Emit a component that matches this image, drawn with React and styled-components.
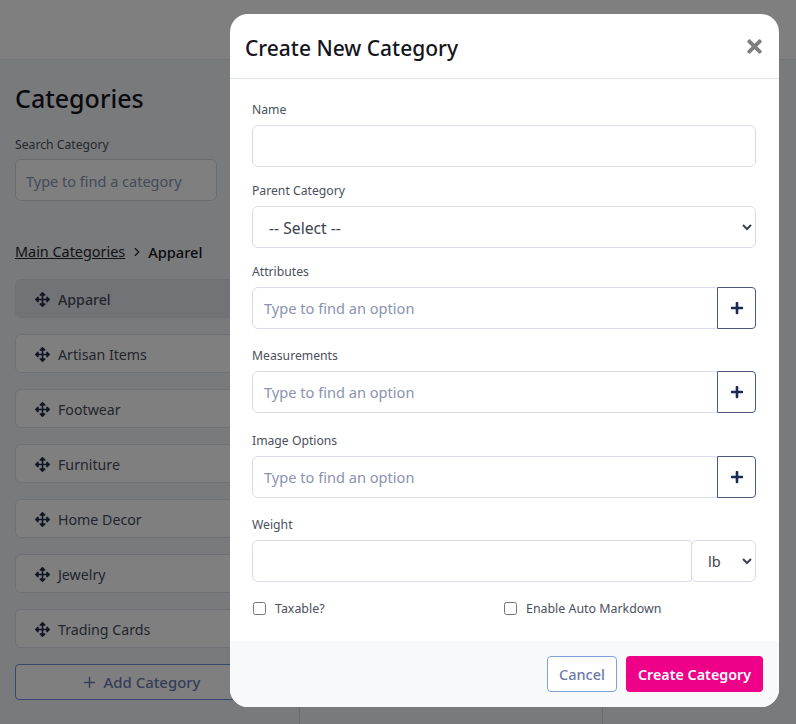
import styled, { createGlobalStyle } from "styled-components";
import { FaArrowsAlt, FaPlus, FaTimes } from "react-icons/fa";
import { LuChevronRight, LuPlus } from "react-icons/lu";

const GlobalStyle = createGlobalStyle`
  html, body {
    margin: 0;
    padding: 0;
  }
  body {
    font-family: "Noto Sans", "Open Sans", sans-serif;
    background: #f3f4f9;
  }
  * {
    box-sizing: border-box;
  }
`;

const Page = styled.div`
  position: relative;
  width: 796px;
  height: 724px;
  overflow: hidden;
  background: #f3f4f9;
`;

const TopBar = styled.header`
  height: 60px;
  background: #fff;
  border-bottom: 1px solid #e8e9ef;
`;

const Columns = styled.div`
  display: flex;
  height: 664px;
`;

const Sidebar = styled.aside`
  width: 300px;
  padding: 21px 33px 0 15px;
  border-right: 1px solid #d8d9e2;
`;

const MiddleColumn = styled.div`
  width: 303px;
  border-right: 1px solid #d8d9e2;
`;

const PageTitle = styled.h1`
  margin: 0 0 21px;
  font-size: 25px;
  line-height: 34px;
  font-weight: 500;
  color: #14161c;
`;

const SmallLabel = styled.div`
  font-size: 12.2px;
  line-height: 17px;
  color: #4b505c;
`;

const SearchInput = styled.input`
  display: block;
  width: 202px;
  height: 42px;
  margin-top: 6px;
  padding: 1px 10px 0;
  font: inherit;
  font-size: 14.5px;
  border: 1px solid #d5d7e6;
  border-radius: 6px;
  background: #fff;
  &::placeholder {
    color: #8a93b0;
  }
`;

const Breadcrumb = styled.nav`
  display: flex;
  align-items: center;
  gap: 4.5px;
  margin-top: 40px;
  font-size: 14.4px;
  line-height: 22px;
  color: #23262f;
`;

const CrumbLink = styled.a`
  text-decoration: underline;
`;

const CrumbCurrent = styled.strong`
  font-size: 14.6px;
  font-weight: 500;
  color: #14161c;
`;

const CategoryList = styled.ul`
  list-style: none;
  margin: 16px 0 0;
  padding: 0;
  display: flex;
  flex-direction: column;
  gap: 16px;
`;

const CategoryItem = styled.li`
  display: flex;
  align-items: center;
  gap: 8px;
  height: 39px;
  padding: 1px 0 0 19px;
  font-size: 14.2px;
  font-weight: ${(props) => (props.$active ? 500 : 400)};
  color: #464b5a;
  background: ${(props) => (props.$active ? "#e4e6ee" : "#fff")};
  border: 1px solid #dfe1ea;
  border-radius: 6px;
  svg {
    color: #1f2a44;
  }
`;

const AddButton = styled.button`
  display: flex;
  align-items: center;
  justify-content: center;
  gap: 6px;
  width: 100%;
  height: 36px;
  margin-top: 16px;
  font: inherit;
  font-size: 14.9px;
  font-weight: 500;
  color: #6b7bb0;
  background: #fff;
  border: 1px solid #6c8fd8;
  border-radius: 4px;
`;

const Backdrop = styled.div`
  position: absolute;
  inset: 0;
  background: rgba(0, 0, 0, 0.5);
`;

const Modal = styled.div`
  position: absolute;
  left: 230px;
  top: 14px;
  width: 549px;
  height: 693px;
  display: flex;
  flex-direction: column;
  background: #fff;
  border-radius: 18px;
  overflow: hidden;
`;

const ModalHeader = styled.div`
  display: flex;
  align-items: center;
  justify-content: space-between;
  height: 65px;
  padding: 4px 14px 0 15px;
  border-bottom: 1px solid #e2e5ee;
`;

const ModalTitle = styled.h2`
  margin: 0;
  font-size: 21px;
  font-weight: 500;
  color: #14161c;
`;

const CloseButton = styled.button`
  display: flex;
  margin-top: -3px;
  padding: 0;
  border: none;
  background: none;
  color: #7f7f7f;
`;

const ModalBody = styled.div`
  flex: 1;
  padding: 22px 23px 0 22px;
`;

const Field = styled.div`
  margin-bottom: ${(props) => (props.$addon ? "18.33px" : "15px")};
`;

const FieldLabel = styled.label`
  display: block;
  height: 24px;
  font-size: 12.2px;
  line-height: 18px;
  color: #4b505c;
`;

const TextInput = styled.input`
  display: block;
  width: 100%;
  height: 42px;
  padding: 0 11px;
  font: inherit;
  font-size: 14.6px;
  color: #3d4250;
  background: #fff;
  border: 1px solid #d9dbeb;
  border-radius: 6px;
  &::placeholder {
    color: #8a93b0;
  }
`;

const SelectInput = styled.select`
  display: block;
  width: 100%;
  height: 42px;
  padding: 1px 12px 0;
  font: inherit;
  font-size: 15.7px;
  color: #3d4250;
  background: #fff;
  border: 1px solid #d9dbeb;
  border-radius: 6px;
`;

const InputGroup = styled.div`
  display: flex;
  ${TextInput} {
    flex: 1;
    border-top-right-radius: 3px;
    border-bottom-right-radius: 3px;
  }
`;

const UnitSelect = styled(SelectInput)`
  width: 65px;
  flex: none;
  margin-left: -1px;
  font-size: 14.5px;
`;

const PlusButton = styled.button`
  display: flex;
  align-items: center;
  justify-content: center;
  flex: none;
  width: 39px;
  height: 42px;
  margin-left: -1px;
  padding: 0;
  color: #1a2a50;
  background: #fff;
  border: 1px solid #4a5a7c;
  border-radius: 0 4px 4px 0;
`;

const CheckRow = styled.div`
  display: grid;
  grid-template-columns: 251px 1fr;
  padding-top: 2px;
`;

const CheckLabel = styled.label`
  display: flex;
  align-items: center;
  gap: 9px;
  font-size: 12.4px;
  line-height: 20px;
  color: #4b505c;
  input {
    margin: 0 0 0 1px;
    width: 13px;
    height: 13px;
  }
`;

const ModalFooter = styled.div`
  display: flex;
  justify-content: flex-end;
  gap: 9px;
  height: 66px;
  padding: 15px 16px 0 0;
  background: #f8f9fb;
`;

const CancelButton = styled.button`
  width: 70px;
  height: 36px;
  padding: 0;
  font: inherit;
  font-size: 14.5px;
  font-weight: 500;
  color: #6b7ba8;
  background: #fff;
  border: 1px solid #7ea2dc;
  border-radius: 4px;
`;

const CreateButton = styled.button`
  width: 137px;
  height: 36px;
  padding: 0;
  font: inherit;
  font-size: 14.3px;
  font-weight: 600;
  color: #fff;
  background: #ee0088;
  border: none;
  border-radius: 4px;
`;

const categories = [
  "Apparel",
  "Artisan Items",
  "Footwear",
  "Furniture",
  "Home Decor",
  "Jewelry",
  "Trading Cards",
];

const addonFields = ["Attributes", "Measurements", "Image Options"];

export default function App() {
  return (
    <>
      <GlobalStyle />
      <Page>
        <TopBar />
        <Columns>
          <Sidebar>
            <PageTitle>Categories</PageTitle>
            <SmallLabel>Search Category</SmallLabel>
            <SearchInput placeholder="Type to find a category" />
            <Breadcrumb>
              <CrumbLink>Main Categories</CrumbLink>
              <LuChevronRight size={14} />
              <CrumbCurrent>Apparel</CrumbCurrent>
            </Breadcrumb>
            <CategoryList>
              {categories.map((name, i) => (
                <CategoryItem key={name} $active={i === 0}>
                  <FaArrowsAlt size={15} />
                  {name}
                </CategoryItem>
              ))}
            </CategoryList>
            <AddButton>
              <LuPlus size={17} />
              Add Category
            </AddButton>
          </Sidebar>
          <MiddleColumn />
        </Columns>
        <Backdrop />
        <Modal>
          <ModalHeader>
            <ModalTitle>Create New Category</ModalTitle>
            <CloseButton aria-label="Close">
              <FaTimes size={21} />
            </CloseButton>
          </ModalHeader>
          <ModalBody>
            <Field>
              <FieldLabel>Name</FieldLabel>
              <TextInput />
            </Field>
            <Field>
              <FieldLabel>Parent Category</FieldLabel>
              <SelectInput>
                <option>-- Select --</option>
              </SelectInput>
            </Field>
            {addonFields.map((label) => (
              <Field key={label} $addon>
                <FieldLabel>{label}</FieldLabel>
                <InputGroup>
                  <TextInput placeholder="Type to find an option" />
                  <PlusButton aria-label={`Add ${label}`}>
                    <FaPlus size={14} />
                  </PlusButton>
                </InputGroup>
              </Field>
            ))}
            <Field>
              <FieldLabel>Weight</FieldLabel>
              <InputGroup>
                <TextInput />
                <UnitSelect>
                  <option>lb</option>
                </UnitSelect>
              </InputGroup>
            </Field>
            <CheckRow>
              <CheckLabel>
                <input type="checkbox" />
                Taxable?
              </CheckLabel>
              <CheckLabel>
                <input type="checkbox" />
                Enable Auto Markdown
              </CheckLabel>
            </CheckRow>
          </ModalBody>
          <ModalFooter>
            <CancelButton>Cancel</CancelButton>
            <CreateButton>Create Category</CreateButton>
          </ModalFooter>
        </Modal>
      </Page>
    </>
  );
}
